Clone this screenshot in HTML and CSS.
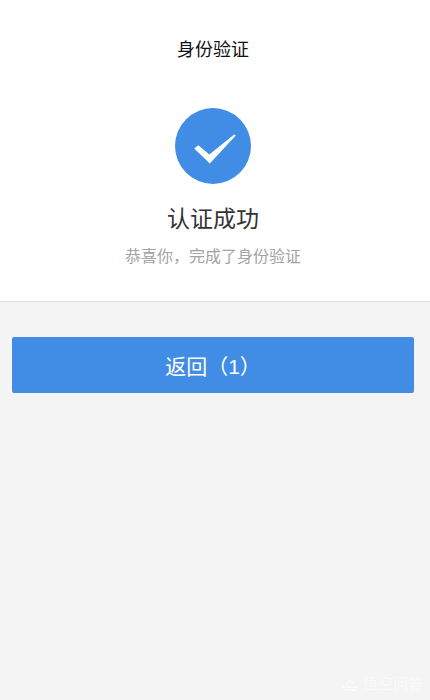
FILE: index.html
```html
<!DOCTYPE html>
<html lang="zh">
<head>
<meta charset="utf-8">
<title>身份验证</title>
<link rel="stylesheet" href="styles.css">
</head>
<body>
<div class="page">
  <section class="result">
    <h1 class="nav-title">身份验证</h1>
    <svg class="check" viewBox="0 0 76 76" aria-hidden="true">
      <circle cx="38" cy="38" r="38" fill="#418ce4"/>
      <path d="M19.2 40.4 L23.3 37.2 L34.3 46.4 L59.2 26.4 L60.8 27.6 L34.8 55.6 Z" fill="#fff"/>
    </svg>
    <h2 class="result-title">认证成功</h2>
    <p class="result-desc">恭喜你，完成了身份验证</p>
  </section>
  <div class="actions">
    <button class="back" type="button">返回（1）</button>
  </div>
  <div class="watermark">
    <svg class="wm-logo" viewBox="0 0 18 14" aria-hidden="true">
      <path d="M5 8 Q9 0 13 8 M1 10 H17 M3 13 H15" fill="none" stroke="#fff" stroke-width="1.4"/>
    </svg>
    <span>悟空问答</span>
  </div>
</div>
</body>
</html>
```
FILE: styles.css
```css
* { box-sizing: border-box; }
html, body { margin: 0; height: 100%; }
body {
  font-family: "Liberation Sans", "Noto Sans CJK SC", sans-serif;
  background: #f4f4f4;
}
.page {
  position: relative;
  height: 700px;
  overflow: hidden;
}
.result {
  height: 302px;
  padding: 0 4px 0 0;
  background: #fff;
  border-bottom: 1px solid #e2e2e2;
  display: flex;
  flex-direction: column;
  align-items: center;
}
.nav-title {
  margin: 37px 0 0;
  font-size: 18px;
  line-height: 26px;
  font-weight: 400;
  color: #111;
}
.check {
  width: 76px;
  height: 76px;
  margin-top: 45px;
  display: block;
}
.result-title {
  margin: 18px 0 0;
  font-size: 23px;
  line-height: 34px;
  font-weight: 400;
  color: #333;
}
.result-desc {
  margin: 9px 0 0;
  font-size: 16px;
  line-height: 24px;
  color: #a3a3a3;
}
.actions {
  padding: 35px 16px 0 12px;
}
.back {
  display: block;
  width: 100%;
  height: 56px;
  border: 0;
  border-radius: 2px;
  background: #418ce4;
  color: #fff;
  font-family: inherit;
  font-size: 21px;
  line-height: 52px;
  padding: 4px 0 0;
}
.watermark {
  position: absolute;
  right: 7px;
  bottom: 8px;
  display: flex;
  align-items: center;
  gap: 4px;
  color: #fff;
  font-size: 15px;
  line-height: 16px;
  opacity: .6;
}
.wm-logo {
  width: 18px;
  height: 14px;
  display: block;
}
```
